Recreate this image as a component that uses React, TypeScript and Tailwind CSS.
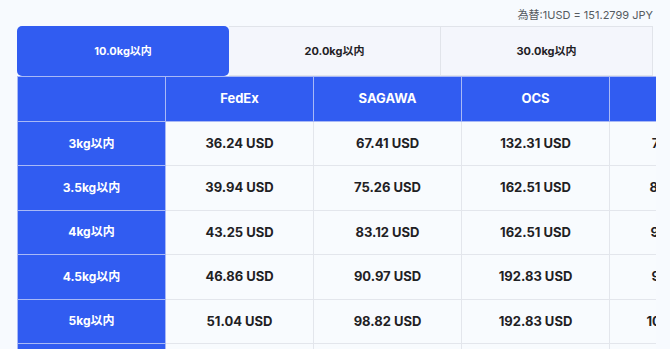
const tabs = ['10.0kg以内', '20.0kg以内', '30.0kg以内'];

const carriers = ['FedEx', 'SAGAWA', 'OCS', 'EMS'];

const rows = [
  { weight: '3kg以内', prices: ['36.24 USD', '67.41 USD', '132.31 USD', '78.10 USD'] },
  { weight: '3.5kg以内', prices: ['39.94 USD', '75.26 USD', '162.51 USD', '84.65 USD'] },
  { weight: '4kg以内', prices: ['43.25 USD', '83.12 USD', '162.51 USD', '91.20 USD'] },
  { weight: '4.5kg以内', prices: ['46.86 USD', '90.97 USD', '192.83 USD', '97.74 USD'] },
  { weight: '5kg以内', prices: ['51.04 USD', '98.82 USD', '192.83 USD', '104.29 USD'] },
  { weight: '5.5kg以内', prices: ['54.71 USD', '106.67 USD', '223.15 USD', '110.84 USD'] },
];

const App = () => {
  return (
    <div className="min-h-screen bg-[#f7fafe] px-[17px] font-['Inter','Noto_Sans_CJK_JP',sans-serif] text-[#1f2124]">
      {/* Rate */}
      <div className="flex justify-end pt-[8px] pb-[4px] text-[11px] leading-[14px] text-[#555a60]">
        為替:1USD = 151.2799 JPY
      </div>

      {/* Tabs */}
      <div className="grid grid-cols-3 h-[50px]">
        {tabs.map((t, i) => (
          <button
            key={t}
            className={
              i === 0
                ? 'rounded-[5px] bg-[#315cf1] text-white text-[11px] font-bold'
                : 'border border-[#e1e4ea] border-l-0 bg-[#f4f6fc] text-[11px] font-bold text-[#1f2124]'
            }
          >
            {t}
          </button>
        ))}
      </div>

      {/* Table */}
      <div className="overflow-x-auto w-[639px]">
        <table className="border-collapse table-fixed w-[741px]">
          <thead>
            <tr className="h-[45px]">
              <th className="w-[148px] bg-[#315cf1] border border-[#a9b9f6]"></th>
              {carriers.map(c => (
                <th key={c} className="w-[148px] bg-[#315cf1] border border-[#a9b9f6] text-white text-[13px] font-bold">
                  {c}
                </th>
              ))}
            </tr>
          </thead>
          <tbody>
            {rows.map(r => (
              <tr key={r.weight} className="h-[44.4px]">
                <td className="bg-[#315cf1] border border-[#a9b9f6] text-white text-[12px] font-bold text-center">
                  {r.weight}
                </td>
                {r.prices.map((p, i) => (
                  <td key={i} className="bg-[#f8fbfe] border border-[#e3e6ec] text-[13px] font-bold text-center text-[#1f2124]">
                    {p}
                  </td>
                ))}
              </tr>
            ))}
          </tbody>
        </table>
      </div>
    </div>
  );
};

export default App;
